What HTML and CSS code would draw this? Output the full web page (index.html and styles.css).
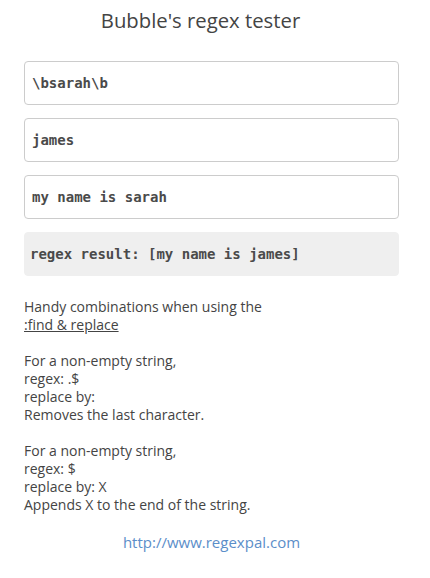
FILE: index.html
```html
<!DOCTYPE html>
<html>
<head>
<meta charset="utf-8">
<link rel="stylesheet" href="styles.css">
</head>
<body>
<div class="page">
  <h1 class="title">Bubble's regex tester</h1>
  <div class="fields">
    <div class="field">\bsarah\b</div>
    <div class="field">james</div>
    <div class="field">my name is sarah</div>
    <div class="field result">regex result: [my name is james]</div>
  </div>
  <div class="notes">
    <p>Handy combinations when using the<br><span class="u">:find &amp; replace</span></p>
    <p>For a non-empty string,<br>regex: .$<br>replace by:<br>Removes the last character.</p>
    <p>For a non-empty string,<br>regex: $<br>replace by: X<br>Appends X to the end of the string.</p>
  </div>
  <div class="link">http://www.regexpal.com</div>
</div>
</body>
</html>
```
FILE: styles.css
```css
html, body { margin: 0; padding: 0; background: #fff; }
body { font-family: "Open Sans", "DejaVu Sans", sans-serif; color: #444; }
.page { padding: 0 31px 0 24px; }
.title {
  margin: 0;
  padding-top: 8px;
  height: 61px;
  box-sizing: border-box;
  font-weight: 400;
  font-size: 20.3px;
  line-height: 24px;
  text-align: center;
  padding-right: 22px;
  color: #444;
}
.fields { display: flex; flex-direction: column; gap: 13px; }
.field {
  height: 44px;
  box-sizing: border-box;
  border: 1px solid #ccc;
  border-radius: 4px;
  padding: 0 7px;
  display: flex;
  align-items: center;
  font-family: "DejaVu Sans Mono", monospace;
  font-weight: bold;
  font-size: 14px;
  color: #4a4a4a;
  white-space: pre;
}
.result { background: #efefef; border-color: #efefef; padding-left: 5px; }
.notes { margin-top: 22px; font-size: 14px; line-height: 18px; color: #444; }
.notes p { margin: 0 0 18px 0; }
.u { text-decoration: underline; }
.link { text-align: center; color: #5b8ec9; font-size: 15px; margin-top: 13px; }
```
